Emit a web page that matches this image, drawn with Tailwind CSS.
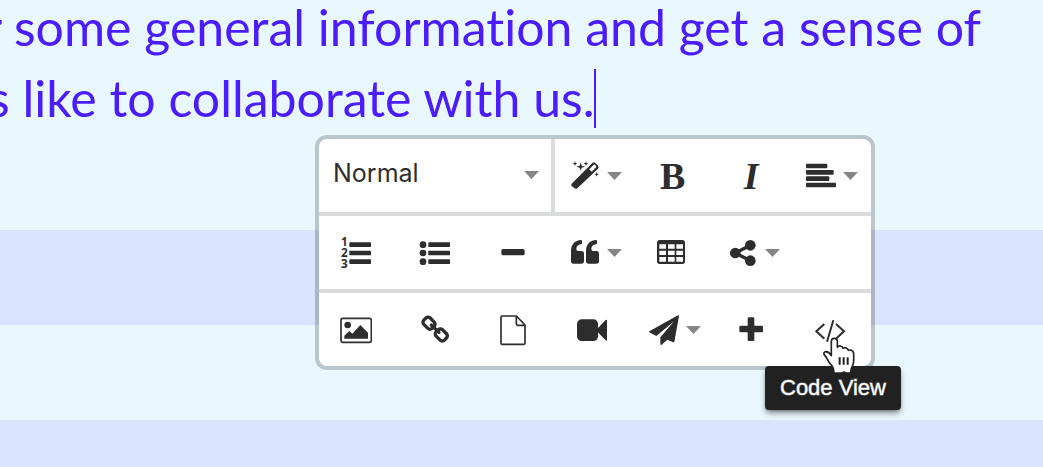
<!DOCTYPE html>
<html lang="en">
<head>
  <meta charset="UTF-8"/>
  <meta name="viewport" content="width=device-width, initial-scale=1.0"/>
  <title>Page editor</title>
  <script src="https://cdn.jsdelivr.net/npm/@tailwindcss/browser@4"></script>
</head>
<body class="relative flex h-screen flex-col overflow-hidden bg-[#e8f8fe] text-[#2d2d2d]">

  <!-- Editable text -->
  <main class="h-[230px] shrink-0 overflow-hidden">
    <div class="-mt-2 whitespace-nowrap font-['Lato',sans-serif] text-[50px] leading-[71px] text-[#4b1cff] [font-variant-ligatures:none]">
      <p class="-ml-4">r some general information and get a sense of</p>
      <p class="-ml-3 flex items-center">s like to collaborate with us.<span class="h-[59px] w-0.5 bg-[#4b1cff]"></span></p>
    </div>
  </main>

  <!-- Striped rows -->
  <div class="h-[95px] shrink-0 bg-[#d9e3fd]"></div>
  <div class="h-[95px] shrink-0"></div>
  <div class="flex-1 bg-[#d9e3fd]"></div>

  <!-- Floating toolbar -->
  <div role="toolbar" aria-label="Formatting" class="absolute left-[315px] top-[135px] w-[560px] rounded-xl border-4 border-black/20 bg-white bg-clip-padding">

    <div class="grid h-[77px] grid-cols-7 border-b-4 border-[#dadbdc] pr-0.5">
      <div class="relative col-span-3 border-r-4 border-[#dadbdc]">
        <select aria-label="Text style" class="h-full w-full appearance-none pb-1 pl-3.5 font-['Inter',sans-serif] text-[25px] outline-none">
          <option>Normal</option>
        </select>
        <svg class="pointer-events-none absolute right-3 top-8 h-2 w-[15px] fill-[#858585]" viewBox="0 0 15 8"><path d="M0 0h15L7.5 8z"/></svg>
      </div>
      <button type="button" aria-label="Styles" class="flex items-center justify-center gap-1.5 pl-1">
        <svg class="size-8 shrink-0" viewBox="0 0 96 96" fill="currentColor">
          <path d="M8 71 70 9q5-4 9 0l8 8q4 4 0 9L25 85q-4 3-8 0l-9-7q-3-3 0-7z"/>
          <path fill="#fff" d="M61 28 74 14l4 0 4 5-1 3-13 13z"/>
          <path d="M35 7l3 10 10 3-10 3-3 10-3-10-10-3 10-3zM18 4l2 5 5 2-5 2-2 5-2-5-5-2 5-2zM51 4l2 5 5 2-5 2-2 5-2-5-5-2 5-2zM83 36l2 5 5 2-5 2-2 5-2-5-5-2 5-2z"/>
        </svg>
        <svg class="h-2 w-[15px] shrink-0 fill-[#858585]" viewBox="0 0 15 8"><path d="M0 0h15L7.5 8z"/></svg>
      </button>
      <button type="button" aria-label="Bold" class="font-['Liberation_Serif',serif] text-[38px] font-bold leading-8">B</button>
      <button type="button" aria-label="Italic" class="font-['Liberation_Serif',serif] text-[38px] font-bold italic leading-8">I</button>
      <button type="button" aria-label="Align" class="flex items-center justify-center gap-1.5 pl-1">
        <svg class="size-8 shrink-0" viewBox="0 0 96 96" fill="currentColor">
          <rect x="3" y="11" width="64" height="14" rx="3"/>
          <rect x="3" y="30" width="83" height="14" rx="3"/>
          <rect x="3" y="49" width="70" height="14" rx="3"/>
          <rect x="3" y="68" width="90" height="14" rx="3"/>
        </svg>
        <svg class="h-2 w-[15px] shrink-0 fill-[#858585]" viewBox="0 0 15 8"><path d="M0 0h15L7.5 8z"/></svg>
      </button>
    </div>

    <div class="grid h-[77px] grid-cols-7 border-b-4 border-[#dadbdc] pr-0.5">
      <button type="button" aria-label="Ordered list" class="flex items-center justify-center pr-1">
        <svg class="size-8 overflow-visible" viewBox="0 0 96 96" fill="currentColor">
          <g font-family="Noto Sans, sans-serif" font-weight="bold" font-size="35">
            <text x="3" y="28">1</text>
            <text x="3" y="60">2</text>
            <text x="3" y="92">3</text>
          </g>
          <rect x="28" y="16" width="65" height="14" rx="2"/>
          <rect x="28" y="41" width="65" height="14" rx="2"/>
          <rect x="28" y="67" width="65" height="14" rx="2"/>
        </svg>
      </button>
      <button type="button" aria-label="Unordered list" class="flex items-center justify-center pr-1">
        <svg class="size-8" viewBox="0 0 96 96" fill="currentColor">
          <circle cx="12" cy="23" r="10"/>
          <circle cx="12" cy="48" r="10"/>
          <circle cx="12" cy="74" r="10"/>
          <rect x="28" y="16" width="65" height="14" rx="2"/>
          <rect x="28" y="41" width="65" height="14" rx="2"/>
          <rect x="28" y="67" width="65" height="14" rx="2"/>
        </svg>
      </button>
      <button type="button" aria-label="Horizontal line" class="flex items-center justify-center pr-1">
        <svg class="size-8" viewBox="0 0 96 96" fill="currentColor"><rect x="13" y="36" width="70" height="19" rx="5"/></svg>
      </button>
      <button type="button" aria-label="Quote" class="flex items-center justify-center gap-1.5 pl-1">
        <svg class="size-8 shrink-0" viewBox="0 0 96 96" fill="currentColor">
          <path d="M6 42C6 22 18 10 36 9q3 0 3 3v7q0 3-3 3C27 23 22 28 22 36q0 6 5 6h10q8 0 8 8v22q0 8-8 8H14q-8 0-8-8z"/>
          <path d="M51 42C51 22 63 10 81 9q3 0 3 3v7q0 3-3 3C72 23 67 28 67 36q0 6 5 6h10q8 0 8 8v22q0 8-8 8H59q-8 0-8-8z"/>
        </svg>
        <svg class="h-2 w-[15px] shrink-0 fill-[#858585]" viewBox="0 0 15 8"><path d="M0 0h15L7.5 8z"/></svg>
      </button>
      <button type="button" aria-label="Insert table" class="flex items-center justify-center pr-1">
        <svg class="size-8" viewBox="0 0 96 96">
          <rect x="6" y="9" width="84" height="72" rx="8" fill="currentColor"/>
          <path fill="#fff" d="M13 22h20v13H13zM39 22h20v13H39zM64 22h20v13H64zM13 41h20v13H13zM39 41h20v13H39zM64 41h20v13H64zM13 60h20v14H13zM39 60h20v14H39zM64 60h20v14H64z"/>
        </svg>
      </button>
      <button type="button" aria-label="Share" class="flex items-center justify-center gap-1.5 pl-1">
        <svg class="size-8 shrink-0" viewBox="0 0 96 96" fill="currentColor">
          <path d="M70 25 25 48l45 23" fill="none" stroke="currentColor" stroke-width="10"/>
          <circle cx="25" cy="48" r="16"/>
          <circle cx="70" cy="25" r="16"/>
          <circle cx="70" cy="71" r="16"/>
        </svg>
        <svg class="h-2 w-[15px] shrink-0 fill-[#858585]" viewBox="0 0 15 8"><path d="M0 0h15L7.5 8z"/></svg>
      </button>
    </div>

    <div class="grid h-[73px] grid-cols-7 pr-0.5">
      <button type="button" aria-label="Insert image" class="flex items-center justify-center pr-1">
        <svg class="size-8" viewBox="0 0 96 96" fill="currentColor">
          <rect x="3" y="13" width="91" height="72" rx="6" fill="none" stroke="currentColor" stroke-width="5"/>
          <circle cx="23" cy="33" r="10"/>
          <path d="M13 74v-9l15-14 9 8 24-26 23 23v18z"/>
        </svg>
      </button>
      <button type="button" aria-label="Insert link" class="flex items-center justify-center pr-1">
        <svg class="size-8" viewBox="0 0 96 96" fill="none" stroke="currentColor" stroke-width="10">
          <rect x="13" y="14" width="35" height="27" rx="9" transform="rotate(45 30 27)"/>
          <rect x="50" y="49" width="35" height="27" rx="9" transform="rotate(45 67 62)"/>
          <path d="M37 33 60 55" stroke-linecap="round"/>
        </svg>
      </button>
      <button type="button" aria-label="Upload file" class="flex items-center justify-center pr-1">
        <svg class="size-8" viewBox="0 0 96 96" fill="none" stroke="currentColor" stroke-width="5" stroke-linejoin="round">
          <path d="M12 9q0-3 3-3h43l26 27v55q0 3-3 3H15q-3 0-3-3z"/>
          <path d="M58 6v24q0 4 4 4h22"/>
        </svg>
      </button>
      <button type="button" aria-label="Insert video" class="flex items-center justify-center pr-1">
        <svg class="size-8" viewBox="0 0 96 96" fill="currentColor">
          <rect x="3" y="16" width="63" height="65" rx="14"/>
          <path d="M64 44 89 18q4-2 4 2v57q0 4-4 2L64 53z"/>
        </svg>
      </button>
      <button type="button" aria-label="Send" class="flex items-center justify-center gap-1.5 pl-1">
        <svg class="size-8 shrink-0" viewBox="0 0 96 96" fill="currentColor">
          <path d="M90 4 4 52q-2 2 0 3l21 11 53-44-41 48v21q1 3 4 1l17-15 18 8q3 1 3-2L93 6q0-3-3-2z"/>
        </svg>
        <svg class="h-2 w-[15px] shrink-0 fill-[#858585]" viewBox="0 0 15 8"><path d="M0 0h15L7.5 8z"/></svg>
      </button>
      <button type="button" aria-label="More" class="flex items-center justify-center">
        <svg class="size-8" viewBox="0 0 96 96" fill="currentColor">
          <rect x="13" y="35" width="71" height="20" rx="4"/>
          <rect x="38" y="10" width="20" height="71" rx="4"/>
        </svg>
      </button>
      <button type="button" aria-labelledby="code-tip" class="flex items-center justify-center">
        <svg class="size-8" viewBox="0 0 96 96" fill="none" stroke="currentColor" stroke-width="6">
          <path d="M31 30 7 52l24 22M66 30l24 22-24 22M58 19 39 83"/>
        </svg>
      </button>
    </div>

    <!-- Tooltip and pointer -->
    <div id="code-tip" role="tooltip" class="absolute left-[446px] top-[227px] whitespace-nowrap rounded bg-[#212121] px-[15px] py-2 font-['Liberation_Sans',Arial,sans-serif] text-[22px] leading-7 text-white shadow-md shadow-black/40 [-webkit-text-stroke:1px_rgb(255_255_255/0.5)]">Code View</div>
    <svg class="pointer-events-none absolute left-[504px] top-[198px] h-[38px] w-8" viewBox="0 0 96 114" stroke="#222" stroke-width="5" stroke-linejoin="round">
      <path fill="#fff" d="M25 56V13C25 1 43 1 43 13v18q2-5 9-4 7 1 8 7 3-3 9-1 6 2 7 7 4-2 9 0 7 3 7 11v22q0 9-5 17-4 7-4 18H68q-5-5-10 0H32V98q-1-9-8-15-6-6-12-18Q9 58 4 54q-4-8 4-10 9-1 17 12z"/>
      <path fill="none" stroke-width="6" d="M50 61v22M62 61v22M74 61v22"/>
    </svg>
  </div>

</body>
</html>
